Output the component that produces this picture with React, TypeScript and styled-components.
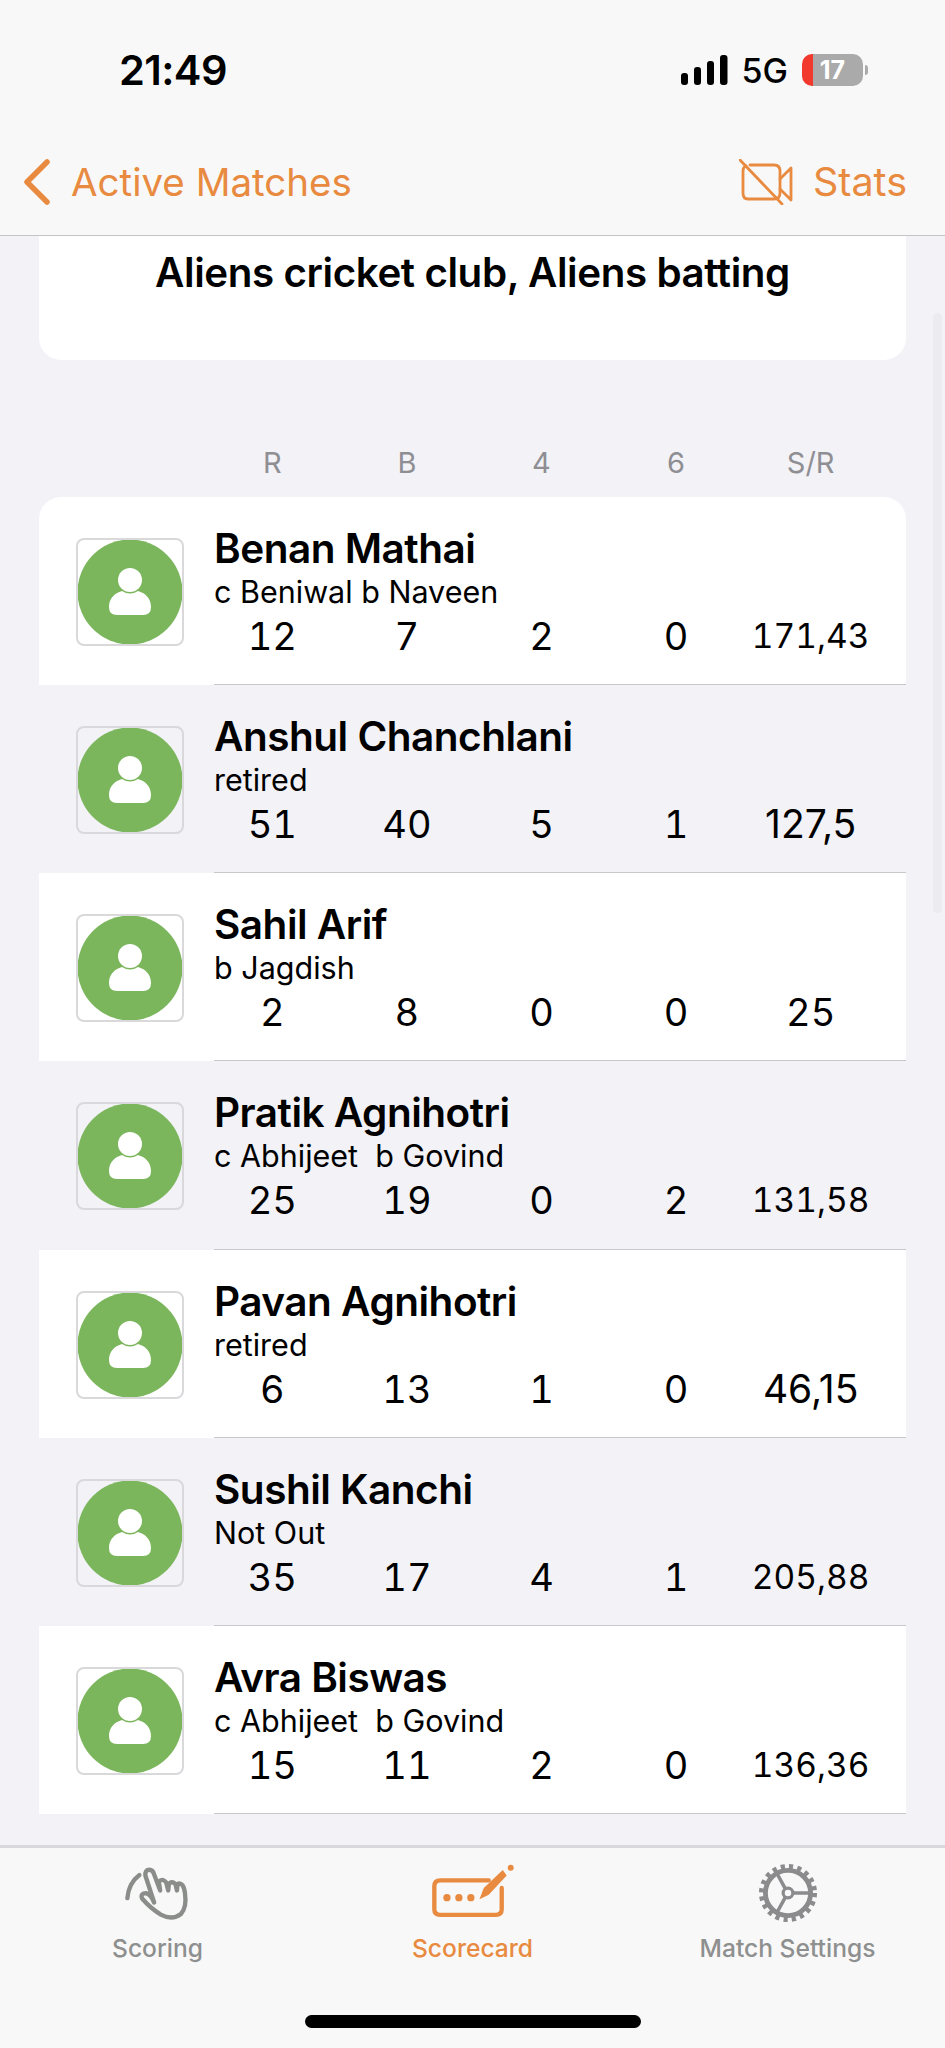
import React from 'react';
import styled, { createGlobalStyle } from 'styled-components';

const ORANGE = '#e88a3f';
const FONT = `Inter, "Liberation Sans", sans-serif`;

const GlobalStyle = createGlobalStyle`
  html, body {
    margin: 0;
    padding: 0;
    background: #f2f2f7;
  }
  * {
    box-sizing: border-box;
  }
`;

const Screen = styled.div`
  width: 945px;
  height: 2048px;
  display: flex;
  flex-direction: column;
  overflow: hidden;
  background: #f2f2f7;
  font-family: ${FONT};
  color: #000;
`;

const TopBars = styled.header`
  height: 236px;
  flex: none;
  background: #f8f8f8;
  border-bottom: 1px solid #c4c4c8;
`;

const StatusBar = styled.div`
  height: 150px;
  padding: 46px 82px 0 119px;
  display: flex;
  justify-content: space-between;
  align-items: flex-start;
`;

const Time = styled.div`
  font-size: 41.5px;
  line-height: 48px;
  font-weight: 600;
  letter-spacing: -0.6px;
`;

const StatusIcons = styled.div`
  display: flex;
  align-items: center;
  gap: 14px;
  height: 48px;
`;

const Network = styled.span`
  font-size: 34px;
  font-weight: 500;
`;

const Battery = styled.div`
  position: relative;
  width: 61px;
  height: 32px;
  border-radius: 10px;
  background: linear-gradient(90deg, #f1392e 0 11px, #aaaaaa 11px);
  color: #fff;
  font-size: 25px;
  font-weight: 700;
  line-height: 32px;
  text-align: center;

  &::after {
    content: '';
    position: absolute;
    right: -5px;
    top: 11px;
    width: 3px;
    height: 10px;
    border-radius: 0 3px 3px 0;
    background: #aaaaaa;
  }
`;

const NavBar = styled.nav`
  display: flex;
  justify-content: space-between;
  align-items: center;
  height: 64px;
  padding: 0 38px 0 23px;
  color: ${ORANGE};
  font-size: 38.5px;
`;

const NavGroup = styled.div`
  display: flex;
  align-items: center;
  gap: ${({ $gap }: { $gap: number }) => $gap}px;
`;

const StatsLink = styled.span`
  font-size: 39.5px;
`;

const Content = styled.main`
  position: relative;
  flex: 1;
  overflow: hidden;
  padding: 0 39px;
`;

const ScrollThumb = styled.div`
  position: absolute;
  right: 3px;
  top: 77px;
  width: 9px;
  height: 600px;
  border-radius: 5px;
  background: #ebebf0;
`;

const TitleCard = styled.section`
  height: 124px;
  padding-top: 13px;
  background: #fff;
  border-radius: 0 0 22px 22px;
  text-align: center;
  font-size: 40.3px;
  line-height: 48px;
  font-weight: 600;
  letter-spacing: -0.4px;
`;

const StatGrid = styled.div`
  display: grid;
  grid-template-columns: repeat(5, 134.6px);
  text-align: center;
`;

const ColumnHeads = styled(StatGrid)`
  margin: 85px 0 16px 166px;
  color: #8e8e93;
  font-size: 29px;
  line-height: 36px;
`;

const Table = styled.section`
  border-radius: 22px 22px 0 0;
  overflow: hidden;
`;

const Row = styled.article<{ $white: boolean }>`
  height: 188.15px;
  display: flex;
  background: ${({ $white }) => ($white ? '#fff' : 'transparent')};
  padding-left: 37px;
`;

const AvatarBox = styled.div`
  flex: none;
  width: 108px;
  height: 108px;
  margin-top: 41px;
  border: 2px solid #d9d9dc;
  border-radius: 8px;
  line-height: 0;
`;

const RowBody = styled.div`
  flex: 1;
  margin-left: 30px;
  padding-top: 29px;
  border-bottom: 1.5px solid #c8c8cc;
`;

const Name = styled.div`
  font-size: 40.5px;
  line-height: 46px;
  font-weight: 600;
  letter-spacing: -0.5px;
`;

const Dismissal = styled.div`
  font-size: 30.5px;
  line-height: 36px;
  margin-top: 2px;
  white-space: pre;
`;

const Stats = styled(StatGrid)`
  margin: 1px 0 0 -9px;
  line-height: 50px;
`;

const StatValue = styled.span<{ $decimal: boolean; $long: boolean }>`
  font-size: ${({ $long, $decimal }) => ($long ? '33.5px' : $decimal ? '39px' : '38px')};
  font-variant-numeric: ${({ $decimal, $long }) => ($decimal && !$long ? 'proportional-nums' : 'tabular-nums')};
  white-space: nowrap;
`;

const TabBar = styled.footer`
  height: 203px;
  flex: none;
  background: #f8f8f8;
  border-top: 3px solid #d9d9dd;
`;

const Tabs = styled.div`
  display: grid;
  grid-template-columns: repeat(3, 1fr);
  height: 167px;
`;

const Tab = styled.div<{ $active?: boolean }>`
  display: flex;
  flex-direction: column;
  align-items: center;
  padding-top: 15px;
  color: ${({ $active }) => ($active ? ORANGE : '#8e8f8f')};
  font-size: 24.6px;
  font-weight: 500;
`;

const TabIcon = styled.div`
  height: 66px;
  line-height: 0;
  margin-bottom: 4px;
`;

const HomeBar = styled.div`
  width: 336px;
  height: 13px;
  margin: 0 auto;
  border-radius: 7px;
  background: #000;
`;

const SignalIcon = () => (
  <svg width="47" height="30" viewBox="0 0 47 30" fill="#000">
    <rect x="0" y="18" width="7" height="12" rx="3" />
    <rect x="13" y="12" width="7" height="18" rx="3" />
    <rect x="26" y="6" width="7" height="24" rx="3" />
    <rect x="39" y="0" width="7.5" height="30" rx="3" />
  </svg>
);

const BackChevron = () => (
  <svg width="27" height="46" viewBox="0 0 27 46" fill="none" stroke={ORANGE} strokeWidth="5.5" strokeLinecap="round" strokeLinejoin="round">
    <path d="M24 3 L4 23 L24 43" />
  </svg>
);

const VideoOff = () => (
  <svg width="54" height="46" viewBox="0 0 54 46" fill="none" stroke={ORANGE} strokeWidth="2.8" strokeLinecap="round" strokeLinejoin="round">
    <path d="M11 6 H35 Q41 6 41 12 V34 Q41 40 35 40 H9 Q4 40 4 34 V12 Q4 8 7 7" />
    <path d="M41 20 L52 9 V41 L41 30" />
    <path d="M1 1 L43 45" />
  </svg>
);

const Avatar = () => (
  <svg width="104" height="104" viewBox="0 0 104 104">
    <circle cx="52" cy="52" r="52.5" fill="#7bb65c" />
    <circle cx="52" cy="40" r="12" fill="#fff" />
    <path d="M31 67 C31 58 37 53 44 51 Q52 56 60 51 C67 53 73 58 73 67 Q73 75 65 75 H39 Q31 75 31 67 Z" fill="#fff" />
  </svg>
);

const ScoringIcon = () => (
  <svg width="67" height="62" viewBox="70 40 200 185" fill="none" stroke="#8a8d8a" strokeWidth="13" strokeLinecap="round" strokeLinejoin="round">
    <path d="M80 145 Q84 100 116 76" />
    <path d="M160 158 L134 78 Q132 60 146 60 Q156 60 160 74 L178 122 L174 96 Q184 84 196 98 L202 122 L204 102 Q214 92 224 104 L228 122 L230 102 Q248 96 252 130 Q258 172 240 192 Q214 212 180 194 Q150 176 124 146 Q118 130 136 130 Q150 134 160 158 Z" />
  </svg>
);

const ScorecardIcon = () => (
  <svg width="83" height="66" viewBox="30 45 250 198">
    <g fill="none" stroke={ORANGE} strokeWidth="13" strokeLinecap="round">
      <path d="M204 97 H58 Q40 97 40 115 V184 Q40 201 58 201 H225 Q243 201 243 184 V120" />
    </g>
    <g fill={ORANGE}>
      <circle cx="78" cy="149" r="11" />
      <circle cx="114" cy="149" r="11" />
      <circle cx="150" cy="149" r="11" />
      <path d="M176 154 L189 120 L246 66 L258 82 L204 140 Z" />
      <circle cx="270" cy="59" r="9" />
    </g>
  </svg>
);

const GearIcon = () => (
  <svg width="60" height="60" viewBox="47 37 186 186" fill="none" stroke="#8b8b8d">
    <circle cx="140" cy="130" r="82" strokeWidth="16" strokeDasharray="12.9 12.9" />
    <circle cx="140" cy="130" r="70" strokeWidth="15" />
    <circle cx="140" cy="130" r="15" strokeWidth="10" />
    <path d="M156 130 H205 M132 117 L105 68 M132 143 L105 192" strokeWidth="11" />
  </svg>
);

const batters = [
  { name: 'Benan Mathai', out: 'c Beniwal b Naveen', stats: ['12', '7', '2', '0', '171,43'] },
  { name: 'Anshul Chanchlani', out: 'retired', stats: ['51', '40', '5', '1', '127,5'] },
  { name: 'Sahil Arif', out: 'b Jagdish', stats: ['2', '8', '0', '0', '25'] },
  { name: 'Pratik Agnihotri', out: 'c Abhijeet  b Govind', stats: ['25', '19', '0', '2', '131,58'] },
  { name: 'Pavan Agnihotri', out: 'retired', stats: ['6', '13', '1', '0', '46,15'] },
  { name: 'Sushil Kanchi', out: 'Not Out', stats: ['35', '17', '4', '1', '205,88'] },
  { name: 'Avra Biswas', out: 'c Abhijeet  b Govind', stats: ['15', '11', '2', '0', '136,36'] },
];

const App = () => (
  <Screen>
    <GlobalStyle />
    <TopBars>
      <StatusBar>
        <Time>21:49</Time>
        <StatusIcons>
          <SignalIcon />
          <Network>5G</Network>
          <Battery>17</Battery>
        </StatusIcons>
      </StatusBar>
      <NavBar>
        <NavGroup $gap={21}>
          <BackChevron />
          <span>Active Matches</span>
        </NavGroup>
        <NavGroup $gap={20}>
          <VideoOff />
          <StatsLink>Stats</StatsLink>
        </NavGroup>
      </NavBar>
    </TopBars>

    <Content>
      <ScrollThumb />
      <TitleCard>Aliens cricket club, Aliens batting</TitleCard>
      <ColumnHeads>
        {['R', 'B', '4', '6', 'S/R'].map((head) => (
          <span key={head}>{head}</span>
        ))}
      </ColumnHeads>
      <Table>
        {batters.map((batter, index) => (
          <Row key={batter.name} $white={index % 2 === 0}>
            <AvatarBox>
              <Avatar />
            </AvatarBox>
            <RowBody>
              <Name>{batter.name}</Name>
              <Dismissal>{batter.out}</Dismissal>
              <Stats>
                {batter.stats.map((value, i) => (
                  <StatValue key={i} $decimal={value.includes(',')} $long={value.length > 5}>{value}</StatValue>
                ))}
              </Stats>
            </RowBody>
          </Row>
        ))}
      </Table>
    </Content>

    <TabBar>
      <Tabs>
        <Tab>
          <TabIcon><ScoringIcon /></TabIcon>
          Scoring
        </Tab>
        <Tab $active>
          <TabIcon><ScorecardIcon /></TabIcon>
          Scorecard
        </Tab>
        <Tab>
          <TabIcon><GearIcon /></TabIcon>
          Match Settings
        </Tab>
      </Tabs>
      <HomeBar />
    </TabBar>
  </Screen>
);

export default App;
